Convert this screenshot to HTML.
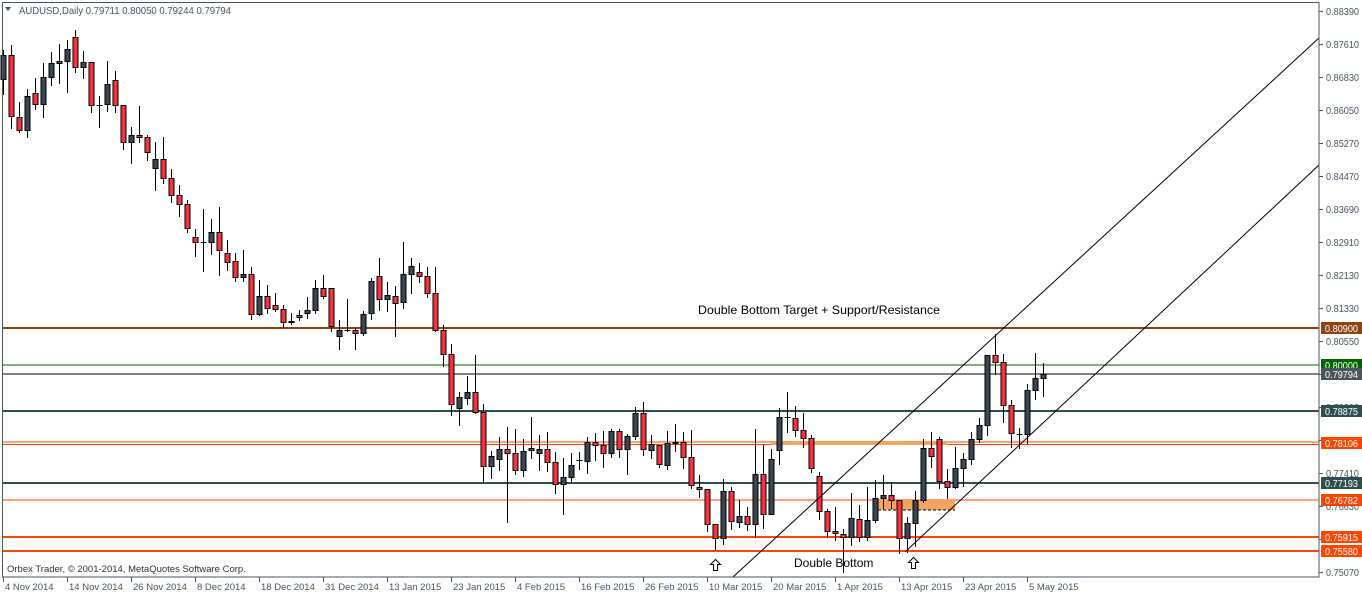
<!DOCTYPE html>
<html><head><meta charset="utf-8"><style>
html,body{margin:0;padding:0;background:#fff;width:1362px;height:594px;overflow:hidden}
svg{display:block;font-family:"Liberation Sans",sans-serif}
</style></head><body>
<svg id="s" width="1362" height="594" xmlns="http://www.w3.org/2000/svg">
<rect x="0" y="0" width="1362" height="594" fill="#fff"/>
<g id="hl"></g>
<g id="cd"></g>
<g id="ov"></g>
</svg>
<script>
var NS="http://www.w3.org/2000/svg",S=document.getElementById('s');
function el(p,t,a,txt){var e=document.createElementNS(NS,t);for(var k in a)e.setAttribute(k,a[k]);if(txt!=null)e.textContent=txt;document.getElementById(p)?document.getElementById(p).appendChild(e):S.appendChild(e);return e;}
var H=[[328,2,'#8b4513'],[365,1,'#006400'],[374,1,'#000'],[411,2,'#2f4f4f'],[442,1,'#ff4500'],[444.5,1,'#ff4500'],[483,2,'#2f4f4f'],[500,1,'#ff4500'],[537,2,'#ff4500'],[551,2,'#ff4500']];
H.forEach(function(h){el('hl','line',{x1:3,x2:1319,y1:h[0],y2:h[0],stroke:h[2],'stroke-width':h[1]});});
el('hl','rect',{x:771,y:441,width:176,height:4,fill:'#f4a460'});
el('hl','rect',{x:878,y:500,width:77,height:10,fill:'#f4a460'});
el('hl','line',{x1:878,x2:955,y1:510,y2:510,stroke:'#000','stroke-dasharray':'3,2','stroke-width':1});
var C=[[55,79,50,95,0],[55,116,45,129,1],[117,130,102,133,1],[96,130,89,138,0],[93,104,78,110,1],[77,104,63,118,0],[63,77,52,86,0],[61,63,44,84,0],[49,61,40,93,0],[37,67,30,73,1],
[62,67,51,79,0],[62,105,62,113,1],[105,105,96,128,0],[84,104,61,112,0],[80,105,71,113,1],[105,142,105,150,1],[135,142,127,164,0],[135,137,106,143,1],[137,152,135,161,1],[159,168,142,191,0],
[159,178,137,184,1],[178,195,169,203,1],[195,204,185,217,1],[204,228,200,233,1],[237,242,229,257,1],[242,242,209,272,0],[232,242,219,255,0],[232,250,207,276,1],[253,262,240,271,1],[261,277,253,282,1],
[274,277,250,282,0],[274,314,267,320,1],[296,314,280,316,0],[296,308,285,314,1],[305,309,293,312,1],[309,322,305,328,1],[321,322,313,325,0],[315,317,310,321,1],[310,313,297,319,0],[288,310,280,314,0],
[288,296,275,299,1],[288,326,288,332,1],[330,336,320,350,0],[330,330,299,332,0],[330,333,328,350,1],[314,333,311,336,0],[281,313,278,320,0],[276,299,258,311,1],[295,299,282,312,0],[296,303,286,337,1],
[274,302,242,309,0],[266,274,258,294,0],[272,276,263,283,1],[276,293,267,298,1],[293,330,267,332,1],[330,354,325,367,1],[354,404,344,416,1],[397,408,392,426,0],[392,398,376,405,0],[392,412,355,414,1],
[412,466,404,483,1],[456,466,451,479,0],[449,459,437,471,0],[449,453,427,523,1],[453,470,429,475,1],[451,470,439,477,0],[448,450,417,459,0],[449,453,435,471,0],[449,462,432,472,1],[462,484,452,494,1],
[477,484,458,515,0],[465,477,453,483,0],[460,460,452,470,0],[442,461,437,474,0],[442,445,433,461,1],[445,453,431,468,1],[431,453,429,458,0],[431,449,429,458,1],[436,449,434,475,0],[413,436,407,440,0],
[413,449,402,456,1],[444,450,435,459,0],[445,464,445,468,1],[443,465,431,470,0],[442,443,424,452,0],[442,457,432,469,1],[457,485,430,489,1],[487,489,475,498,1],[489,524,489,532,1],[524,538,524,550,1],
[491,538,479,545,0],[491,521,487,530,1],[516,522,500,528,0],[516,524,507,531,1],[474,524,429,538,0],[474,514,445,529,1],[459,514,449,515,0],[417,450,408,465,0],[417,417,392,433,0],[418,430,406,437,1],
[430,438,413,448,1],[438,468,435,473,1],[476,511,472,520,1],[511,531,509,538,1],[531,533,507,541,1],[534,537,529,573,1],[518,537,493,546,0],[519,537,505,542,1],[520,537,487,541,0],[498,520,480,523,0],
[495,498,475,509,0],[495,500,482,509,1],[500,538,500,554,1],[523,538,517,553,0],[500,523,491,547,0],[448,500,439,503,0],[448,456,432,468,1],[439,481,437,489,1],[481,487,469,499,1],[468,487,447,489,0],
[459,468,453,487,0],[439,459,432,465,0],[425,439,418,443,0],[355,425,355,436,0],[355,362,334,375,1],[362,405,354,423,1],[405,433,400,448,1],[434,434,428,449,0],[390,434,384,444,0],[378,390,353,400,0],[374,378,363,397,0]];
C.forEach(function(c,i){var x=Math.round(3.3+8*i)+0.5;
el('cd','line',{x1:x,x2:x,y1:c[2],y2:c[3],stroke:'#000','stroke-width':1});
if(c[1]-c[0]<1){el('cd','line',{x1:x-3,x2:x+3,y1:c[0]+.5,y2:c[0]+.5,stroke:'#000','stroke-width':1});}
else el('cd','rect',{x:x-2.5,y:c[0]+.5,width:5,height:c[1]-c[0],fill:c[4]?'#f5333f':'#3a4452',stroke:'#000','stroke-width':1});});
el('ov','line',{x1:733,y1:577,x2:1319,y2:38,stroke:'#000','stroke-width':1});
el('ov','line',{x1:905,y1:552,x2:1319,y2:165,stroke:'#000','stroke-width':1});
el('ov','rect',{x:1320,y:0,width:42,height:594,fill:'#fff'});
el('ov','rect',{x:0,y:578,width:1362,height:16,fill:'#fff'});
el('ov','rect',{x:2.5,y:2.5,width:1316.5,height:574.5,fill:'none',stroke:'#4a5560','stroke-width':1});
var A=['0.88390','0.87610','0.86830','0.86050','0.85270','0.84470','0.83690','0.82910','0.82130','0.81330','0.80550','0.79780','0.78990','0.78200','0.77410','0.76630','0.75850','0.75070'];
A.forEach(function(t,i){var y=11+33*i;el('ov','line',{x1:1319,x2:1323,y1:y+.5,y2:y+.5,stroke:'#4a5560'});el('ov','text',{x:1326,y:y+4,'font-size':'10',fill:'#4a5560',textLength:'33',lengthAdjust:'spacingAndGlyphs'},t);});
var L=[[328,'#8b4513','0.80900'],[365,'#006400','0.80000'],[374,'#4a5560','0.79794'],[411,'#2f4f4f','0.78875'],[443,'#ff4500','0.78106'],[483,'#2f4f4f','0.77193'],[500,'#ff4500','0.76782'],[537,'#ff4500','0.75915'],[551,'#ff4500','0.75580']];
L.forEach(function(l){el('ov','rect',{x:1321,y:l[0]-6,width:41,height:12,fill:l[1]});el('ov','text',{x:1325,y:l[0]+4,'font-size':'10',fill:'#fff',textLength:'33',lengthAdjust:'spacingAndGlyphs'},l[2]);});
var D=['4 Nov 2014','14 Nov 2014','26 Nov 2014','8 Dec 2014','18 Dec 2014','31 Dec 2014','13 Jan 2015','23 Jan 2015','4 Feb 2015','16 Feb 2015','26 Feb 2015','10 Mar 2015','20 Mar 2015','1 Apr 2015','13 Apr 2015','23 Apr 2015','5 May 2015'];
D.forEach(function(t,i){var x=3+64*i;el('ov','line',{x1:x+.5,x2:x+.5,y1:577,y2:582,stroke:'#4a5560'});el('ov','text',{x:x+2,y:590,'font-size':'9.5',fill:'#4a5560'},t);});
el('ov','path',{d:'M5 7 L11 7 L8 11 Z',fill:'#4a5560'});
el('ov','text',{x:19,y:14,'font-size':'10.5',fill:'#4a5560',textLength:'212',lengthAdjust:'spacingAndGlyphs'},'AUDUSD,Daily  0.79711 0.80050 0.79244 0.79794');
el('ov','text',{x:7,y:572,'font-size':'9.5',fill:'#333'},'Orbex Trader, © 2001-2014, MetaQuotes Software Corp.');
el('ov','text',{x:698,y:314,'font-size':'12',fill:'#000',textLength:'242',lengthAdjust:'spacingAndGlyphs'},'Double Bottom Target + Support/Resistance');
el('ov','text',{x:794,y:567,'font-size':'12',fill:'#000'},'Double Bottom');
function arr(x,y){el('ov','path',{d:'M'+x+' '+y+' l-5 5 h3 v6 h4 v-6 h3 z',fill:'#fff',stroke:'#000','stroke-width':1});}
arr(715.5,559.5);arr(913.5,557.5);
</script>
</body></html>
